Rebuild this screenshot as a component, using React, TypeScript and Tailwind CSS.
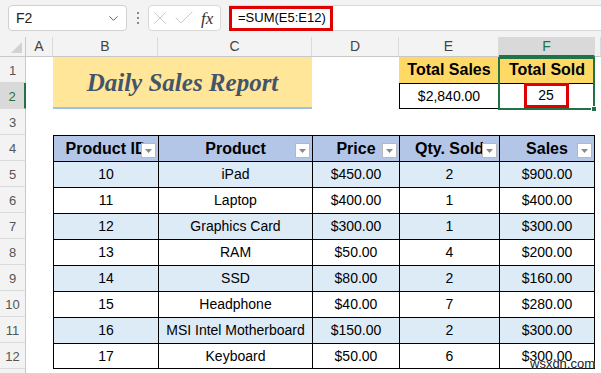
import { ChevronDown, X, Check } from "lucide-react";

const rows: [number, string, string, number, string][] = [
  [10, "iPad", "$450.00", 2, "$900.00"],
  [11, "Laptop", "$400.00", 1, "$400.00"],
  [12, "Graphics Card", "$300.00", 1, "$300.00"],
  [13, "RAM", "$50.00", 4, "$200.00"],
  [14, "SSD", "$80.00", 2, "$160.00"],
  [15, "Headphone", "$40.00", 7, "$280.00"],
  [16, "MSI Intel Motherboard", "$150.00", 2, "$300.00"],
  [17, "Keyboard", "$50.00", 6, "$300.00"],
];

const sans = "font-['Liberation_Sans',Arial,sans-serif]";

function RowHead({ n, active }: { n?: number; active?: boolean }) {
  return (
    <div
      className={`flex items-center justify-center border-b border-[#dadada] text-[13px] text-[#555] ${sans} pt-[3px]
        ${active ? "bg-[#d9d9d9] border-r-2 border-r-[#217346] text-[#217346]" : "bg-[#f3f3f3] border-r border-r-[#c8c8c8]"}`}
    >
      {n}
    </div>
  );
}

function ColHead({ label, active }: { label: string; active?: boolean }) {
  return (
    <div
      className={`flex items-center justify-center border-r border-[#dadada] text-[14px] ${sans}
        ${active ? "bg-[#d9d9d9] border-b-2 border-b-[#217346] text-[#217346]" : "bg-[#f3f3f3] border-b border-b-[#c8c8c8] text-[#444]"}`}
    >
      {label}
    </div>
  );
}

function FilterBtn() {
  return (
    <span className="absolute right-[2px] bottom-[3px] w-[15px] h-[15px] bg-white border border-[#b8b8b8] flex items-center justify-center">
      <svg width="7" height="4" viewBox="0 0 7 4">
        <path d="M0 0h7L3.5 4z" fill="#8a8a8a" />
      </svg>
    </span>
  );
}

function HeadCell({ label, last }: { label: string; last?: boolean }) {
  return (
    <div
      className={`relative flex items-center justify-center overflow-hidden whitespace-nowrap bg-[#b4c6e7] border-l border-t border-black text-[16px] font-bold text-black ${sans}
        ${last ? "border-r" : ""}`}
    >
      {label}
      <FilterBtn />
    </div>
  );
}

function Cell({ children, band, last, bottom }: { children: React.ReactNode; band: boolean; last?: boolean; bottom?: boolean }) {
  return (
    <div
      className={`flex items-center justify-center whitespace-nowrap border-l border-t border-black text-[14px] text-black ${sans}
        ${band ? "bg-[#ddebf7]" : "bg-white"} ${last ? "border-r" : ""} ${bottom ? "border-b" : ""}`}
    >
      {children}
    </div>
  );
}

function Blank() {
  return <div className="bg-white" />;
}

export default function App() {
  return (
    <div className="relative w-[601px] h-[373px] overflow-hidden bg-white">
      {/* formula bar */}
      <div className="h-[37px] bg-[#f3f3f3] flex items-start pt-[5px] pl-[8px]">
        <div className="w-[119px] h-[26px] bg-white border border-[#d0d0d0] rounded-[4px] flex items-center justify-between pl-[7px] pr-[5px]">
          <span className={`text-[14px] text-[#222] ${sans}`}>F2</span>
          <ChevronDown size={15} strokeWidth={1.5} className="text-[#555]" />
        </div>
        <div className="w-[21px] h-[26px] flex flex-col items-center justify-center gap-[3px]">
          <span className="w-[2px] h-[2px] bg-[#8a8a8a]" />
          <span className="w-[2px] h-[2px] bg-[#8a8a8a]" />
          <span className="w-[2px] h-[2px] bg-[#8a8a8a]" />
        </div>
        <div className="w-[73px] h-[26px] bg-white border border-[#d8d8d8] rounded-[4px] flex items-center">
          <X size={22} strokeWidth={0.9} className="text-[#c2c2c2]" />
          <Check size={24} strokeWidth={0.85} className="text-[#c2c2c2] ml-[1px]" />
          <span className="ml-[5px] text-[17px] italic text-[#333] font-['Liberation_Serif',serif] leading-none">fx</span>
        </div>
        <div className="ml-[8px] flex-1 h-[26px] bg-white border-t border-b border-[#d8d8d8] flex items-center">
          <div className={`h-[25px] w-[104px] border-[3px] border-[#e00000] flex items-center pl-[6px] text-[13px] text-black ${sans}`}>
            =SUM(E5:E12)
          </div>
        </div>
      </div>

      {/* sheet */}
      <div className="grid grid-cols-[26px_27px_105px_154px_87px_100px_96px_1fr] grid-rows-[20px_repeat(13,26px)]">
        {/* column headers */}
        <div className="bg-[#f3f3f3] border-r border-b border-[#c8c8c8] flex items-end justify-end pr-[3px] pb-[3px]">
          <svg width="11" height="11" viewBox="0 0 11 11">
            <path d="M11 0V11H0z" fill="#d2d2d2" />
          </svg>
        </div>
        <ColHead label="A" />
        <ColHead label="B" />
        <ColHead label="C" />
        <ColHead label="D" />
        <ColHead label="E" />
        <ColHead label="F" active />
        <ColHead label="" />

        {/* row 1 */}
        <RowHead n={1} />
        <Blank />
        <div className="col-span-2 row-span-2 bg-[#ffe699] border-b-2 border-[#9bc2e6] flex items-center justify-center pt-[1px]">
          <span className="text-[25px] font-bold italic text-[#44546a] font-['Liberation_Serif',serif]">Daily Sales Report</span>
        </div>
        <Blank />
        <div className={`bg-[#ffd966] flex items-center justify-center text-[16px] font-bold text-black ${sans}`}>Total Sales</div>
        <div className={`relative bg-[#ffd966] flex items-center justify-center text-[16px] font-bold text-black ${sans}`}>
          Total Sold
          {/* selection outline over F1:F2 */}
          <div className="absolute -left-[1px] top-0 w-[97px] h-[53px] border-2 border-[#217346] pointer-events-none z-10">
            <span className="absolute -right-[4px] -bottom-[4px] w-[6px] h-[6px] bg-[#217346] border border-white" />
          </div>
        </div>
        <Blank />

        {/* row 2 */}
        <RowHead n={2} active />
        <Blank />
        <Blank />
        <div className={`border border-black flex items-center justify-center text-[14px] text-black ${sans}`}>$2,840.00</div>
        <div className={`border-t border-b border-black flex items-center justify-center text-[14px] text-black ${sans}`}>
          <span className="w-[45px] h-[25px] border-[3px] border-[#e00000] flex items-center justify-center -ml-[2px] -mt-[2px]">25</span>
        </div>
        <Blank />

        {/* row 3 */}
        <RowHead n={3} />
        <Blank />
        <Blank />
        <Blank />
        <Blank />
        <Blank />
        <Blank />
        <Blank />

        {/* row 4: table header */}
        <RowHead n={4} />
        <Blank />
        <HeadCell label="Product ID" />
        <HeadCell label="Product" />
        <HeadCell label="Price" />
        <HeadCell label="Qty. Sold" />
        <HeadCell label="Sales" last />
        <Blank />

        {rows.map((r, i) => {
          const band = i % 2 === 0;
          const bottom = i === rows.length - 1;
          return [
            <RowHead key={`h${i}`} n={5 + i} />,
            <Blank key={`a${i}`} />,
            <Cell key={`b${i}`} band={band} bottom={bottom}>{r[0]}</Cell>,
            <Cell key={`c${i}`} band={band} bottom={bottom}>{r[1]}</Cell>,
            <Cell key={`d${i}`} band={band} bottom={bottom}>{r[2]}</Cell>,
            <Cell key={`e${i}`} band={band} bottom={bottom}>{r[3]}</Cell>,
            <Cell key={`f${i}`} band={band} bottom={bottom} last>{r[4]}</Cell>,
            <Blank key={`g${i}`} />,
          ];
        })}

        <RowHead />
      </div>

      {/* watermark */}
      <span className={`absolute left-[530px] top-[354px] text-[13px] text-[#222] ${sans} [text-shadow:0_0_2px_#fff]`}>
        wsxdn.com
      </span>
    </div>
  );
}
